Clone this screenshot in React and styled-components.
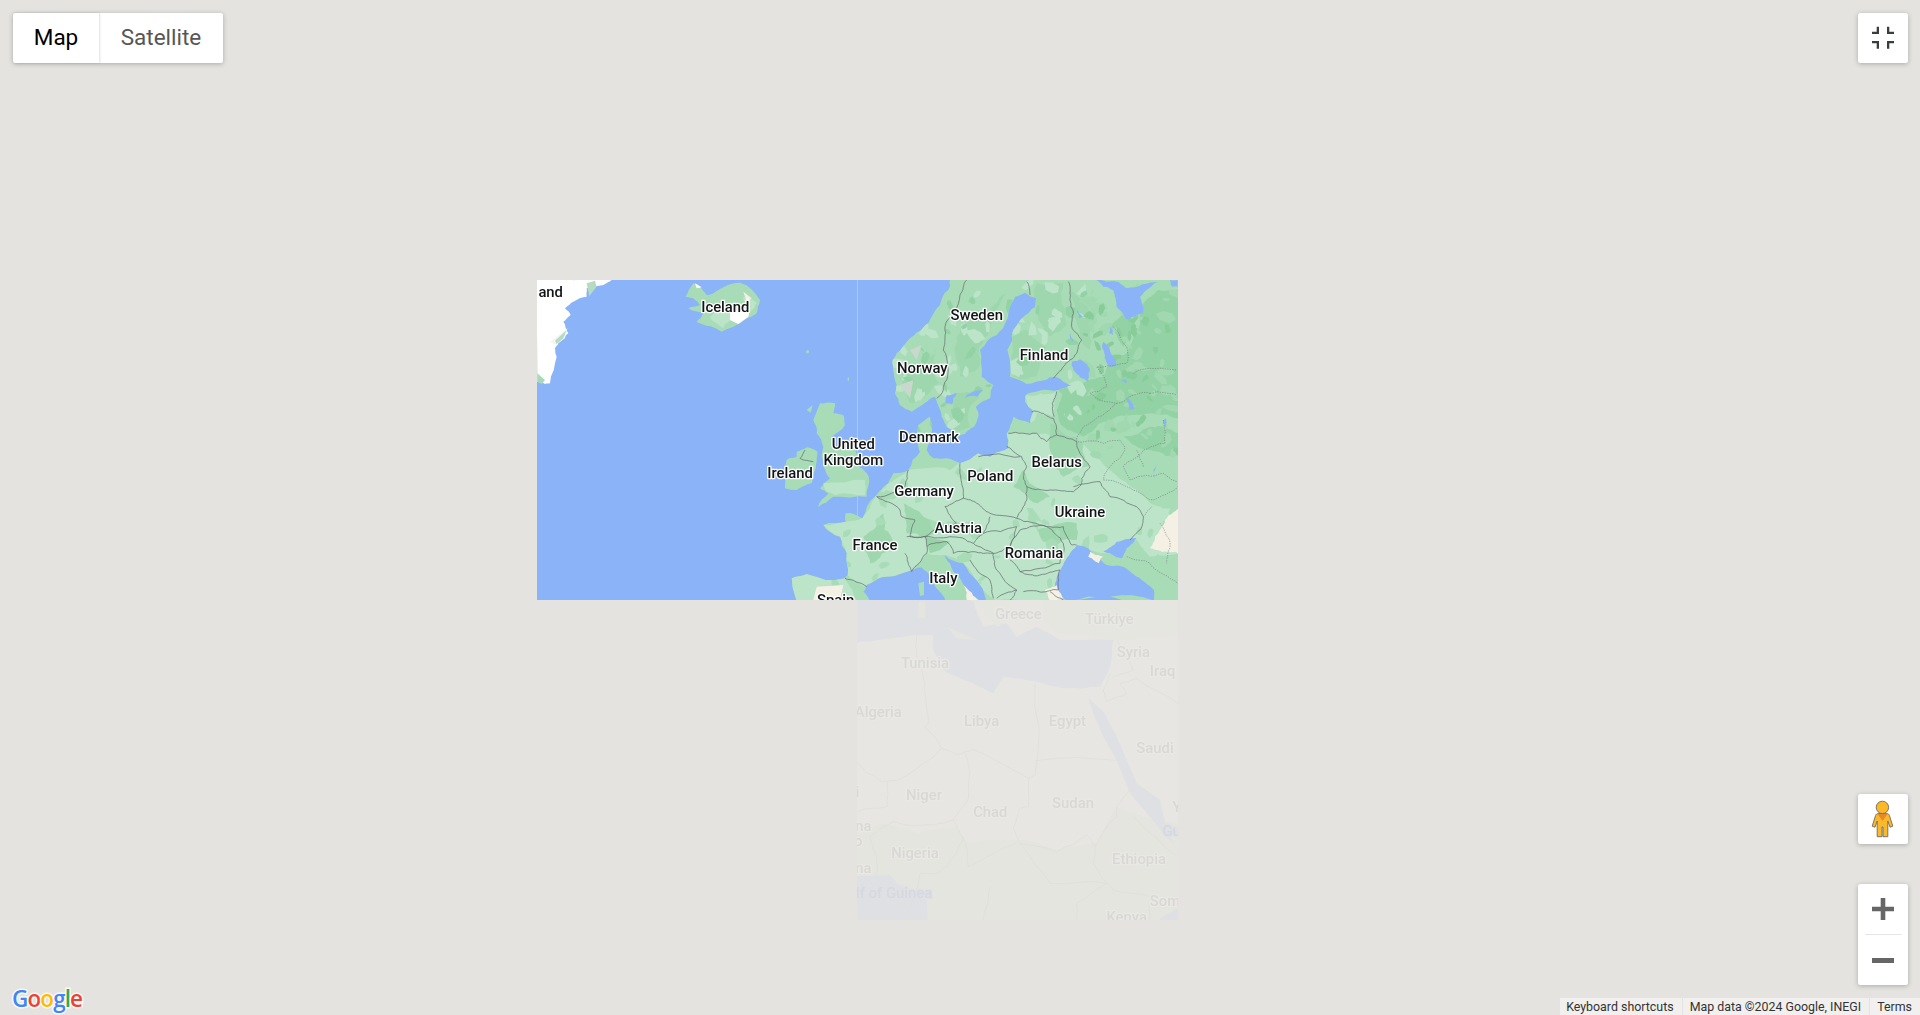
import React from "react";
import styled, { createGlobalStyle } from "styled-components";

const Global = createGlobalStyle`
  html, body { margin: 0; padding: 0; height: 100%; overflow: hidden; background: #e5e3df; }
  #root { height: 100%; }
`;

const Canvas = styled.div`
  position: relative;
  width: 100%;
  height: 100vh;
  overflow: hidden;
  background: #e4e3df;
  font-family: Roboto, "Liberation Sans", sans-serif;
`;

const Tile = styled.svg`
  position: absolute;
  left: ${(p) => p.$left}px;
  top: ${(p) => p.$top}px;
  width: ${(p) => p.$w}px;
  height: 320px;
  display: block;
  filter: blur(${(p) => p.$blur}px);
`;

const PlaceLabel = styled.text`
  font-family: Roboto, "Liberation Sans", sans-serif;
  font-weight: 500;
  font-size: 44.5px;
  fill: ${(p) => p.$fill || "#131416"};
  stroke: ${(p) => p.$halo || "rgba(255, 255, 255, 0.95)"};
  stroke-width: 8px;
  paint-order: stroke;
  stroke-linejoin: round;
`;

const Card = styled.div`
  position: absolute;
  background: #fff;
  border-radius: 2.5px;
  box-shadow: 0 1px 5px rgba(0, 0, 0, 0.25);
`;

const MapTypeBar = styled(Card)`
  left: 13px;
  top: 13px;
  height: 50px;
  display: flex;
`;

const MapTypeButton = styled.div`
  display: flex;
  align-items: center;
  justify-content: center;
  width: ${(p) => p.$w}px;
  font-size: 22.5px;
  padding-bottom: 2px;
  box-sizing: border-box;
  color: ${(p) => (p.$active ? "#000" : "#565656")};
  box-shadow: ${(p) => (p.$active ? "1px 0 2px rgba(0,0,0,.12)" : "none")};
`;

const IconButton = styled(Card)`
  right: 12px;
  top: ${(p) => p.$top}px;
  width: 50px;
  height: 50px;
  display: flex;
  align-items: center;
  justify-content: center;
`;

const ZoomCard = styled(Card)`
  right: 12px;
  top: 884px;
  width: 50px;
  height: 101px;
  display: flex;
  flex-direction: column;
  align-items: center;
`;

const ZoomBtn = styled.div`
  flex: 1;
  width: 100%;
  display: flex;
  align-items: center;
  justify-content: center;
`;

const ZoomDivider = styled.div`
  width: 37px;
  height: 1px;
  background: #e6e6e6;
`;

const Footer = styled.div`
  position: absolute;
  right: 0;
  bottom: 0;
  height: 17px;
  display: flex;
  gap: 1px;
  font-size: 12.4px;
  line-height: 17px;
  color: #333;
`;

const FooterItem = styled.div`
  background: rgba(245, 245, 245, 0.72);
  padding: 0 ${(p) => p.$pr}px 0 ${(p) => p.$pl}px;
  white-space: nowrap;
`;

const GoogleLogo = styled.div`
  position: absolute;
  left: 12px;
  bottom: 2px;
  font-family: "Open Sans", Roboto, sans-serif;
  font-weight: 600;
  font-size: 22.5px;
  line-height: 28px;
  letter-spacing: -0.9px;
  -webkit-text-stroke: 3px rgba(255, 255, 255, 0.75);
  paint-order: stroke fill;
`;

const LogoLetter = styled.span`
  color: ${(p) => p.$c};
`;

const OCEAN = "#8ab4f7";
const BASE = "#a8dcb7";
const LIGHT = "#bbe4c9";
const DARK = "#93d2a4";
const MID = "#9ed7ae";
const SAND = "#f5f0e4";

/* seeded noise so the drawn coastlines stay the same on every load */
const makeRandom = (seed) => () => {
  seed = (seed + 0x6d2b79f5) | 0;
  let t = Math.imul(seed ^ (seed >>> 15), 1 | seed);
  t = (t + Math.imul(t ^ (t >>> 7), 61 | t)) ^ t;
  return ((t ^ (t >>> 14)) >>> 0) / 4294967296;
};

const parse = (s) => s.trim().split(/\s+/).map((p) => p.split(",").map(Number));

const rough = (str, seed = 1, amp = 0.14, depth = 3, closed = false) => {
  const rnd = makeRandom(seed);
  let pts = parse(str);
  if (closed) pts = [...pts, pts[0]];
  for (let d = 0; d < depth; d++) {
    const next = [pts[0]];
    for (let i = 1; i < pts.length; i++) {
      const [ax, ay] = pts[i - 1];
      const [bx, by] = pts[i];
      const dx = bx - ax;
      const dy = by - ay;
      const k = (rnd() - 0.5) * 2 * amp;
      next.push([(ax + bx) / 2 - dy * k, (ay + by) / 2 + dx * k], [bx, by]);
    }
    pts = next;
  }
  return pts.map((p) => `${p[0].toFixed(1)},${p[1].toFixed(1)}`).join(" ");
};

const blobs = (seed, n, [x0, y0, x1, y1], [s0, s1]) => {
  const rnd = makeRandom(seed);
  const out = [];
  for (let i = 0; i < n; i++) {
    const cx = x0 + rnd() * (x1 - x0);
    const cy = y0 + rnd() * (y1 - y0);
    const size = s0 + rnd() * (s1 - s0);
    const angle = rnd() * Math.PI;
    const sq = 0.35 + rnd() * 0.4;
    const count = 6;
    const ring = [];
    for (let j = 0; j < count; j++) {
      const a = (j / count) * Math.PI * 2;
      const r = size * (0.6 + rnd() * 0.7);
      const px = Math.cos(a) * r;
      const py = Math.sin(a) * r * sq;
      ring.push(
        `${(cx + px * Math.cos(angle) - py * Math.sin(angle)).toFixed(1)},${(cy + px * Math.sin(angle) + py * Math.cos(angle)).toFixed(1)}`
      );
    }
    out.push(ring.join(" "));
  }
  return out;
};

const mainland =
  "300,-40 300,30 295,60 270,105 235,160 205,185 180,205 140,250 128,270 132,310 140,345 135,370 150,405 185,425 225,398 255,380 262,400 275,440 290,470 320,495 345,492 372,470 385,425 378,410 420,385 430,345 395,320 390,240 410,215 440,195 470,150 480,110 495,80 525,68 560,85 555,110 535,130 490,180 472,240 480,320 530,342 585,330 615,320 640,335 665,345 625,360 575,360 530,372 525,395 550,425 540,460 490,440 470,490 475,535 450,545 420,560 385,550 330,580 290,565 250,565 230,540 245,490 240,440 205,465 205,530 210,545 175,600 130,610 115,640 75,680 37,745 -13,730 -13,755 -80,765 -30,800 -10,850 -7,915 -15,925 -130,912 -175,925 -160,1040 60,1040 60,992 40,965 50,945 95,922 170,905 215,892 235,910 270,965 310,1040 390,1040 330,925 300,880 285,855 340,880 380,930 440,1040 1100,1040 1100,-40";

const lightAreas = [
  "470,490 560,490 620,495 700,520 780,600 900,700 983,720 983,850 900,860 860,810 780,850 680,825 640,880 620,992 440,992 340,880 285,855 230,850 185,905 215,892 95,922 40,950 -7,915 -10,850 -30,800 -80,765 -13,755 37,745 75,680 115,640 175,600 300,600 330,580 385,550 420,560 470,530",
  "-130,912 -15,925 20,992 -160,992 -175,925",
  "620,365 525,375 530,420 610,440",
];
const darkAreas = [
  "830,250 880,100 925,60 1000,60 1000,450 900,430 800,440 700,500 640,470 620,420 640,360 690,340 760,320 790,260",
  "780,170 830,120 860,170 820,230",
  "820,500 900,470 1000,490 1000,560 900,540",
];
const midAreas = [
  "600,460 700,520 720,590 640,620 600,540",
  "160,700 220,740 300,760 220,800 170,790",
  "480,200 530,180 590,230 560,320 490,320",
  "560,40 640,40 650,160 600,200 560,130",
  "320,200 390,140 470,70 420,180 380,300 330,320",
  "160,300 260,230 270,340 180,400",
  "300,380 400,350 360,470 310,480",
  "680,760 560,780 600,830 680,810",
  "100,730 40,800 60,880 130,820",
  "660,60 740,130 720,240 680,160",
  "520,600 600,680 560,700 490,650",
];
const lakes = [
  "665,275 690,268 720,300 715,335 690,322 670,300",
  "760,215 790,260 800,285 778,290 765,255",
  "290,375 320,370 305,405 288,400",
  "350,375 400,362 380,380 345,385",
  "830,385 855,415 835,420",
  "410,440 428,428 420,458",
  "495,405 522,405 510,415",
  "815,330 830,328 828,340",
  "780,170 790,195 778,190",
  "680,120 700,140 688,145",
  "660,190 672,215 660,205",
  "910,600 920,580 915,625",
  "940,450 948,445 945,475",
];
const seas = [
  "682,825 660,850 640,885 615,940 625,975 650,992 912,992 912,960 870,925 820,890 770,885 740,865 715,835",
  "760,845 800,815 860,805 830,835 815,865 780,850",
  "740,30 760,50 790,60 800,110 830,150 880,130 870,80 925,35 830,55 800,35",
  "960,30 983,30 983,50 965,50",
];
const sandAreas = [
  "1000,715 945,750 915,800 900,835 950,845 1000,860",
  "720,845 760,860 745,880 715,860",
  "620,945 640,985 600,990 585,960",
  "340,945 390,992 350,992",
];
const solidBorders = [
  "350,30 330,75 285,170 280,240 290,330 260,385",
  "530,35 540,75",
  "655,35 660,90 665,170 695,210 680,250 640,290 610,325",
  "545,425 580,430 610,445 620,495 590,515 560,490 475,490",
  "620,365 607,400 612,440",
  "620,495 680,515 690,550 720,590 695,625 695,640 670,665 600,660 530,650 520,620 530,590 515,560 470,530",
  "385,560 510,560",
  "330,580 335,640 340,685 380,700 420,730 500,745 530,690 530,650",
  "500,745 590,770 640,770 665,825 680,825",
  "670,650 750,635 780,680 860,710 880,740 870,780 840,810",
  "175,600 165,650 80,680 150,720 155,740 195,750 180,800 225,800",
  "340,685 285,710 320,760 225,800 300,800 370,820 400,790 420,740",
  "400,790 500,770 480,830 430,850 370,820",
  "480,830 510,780 590,770 640,820 630,880 510,905 480,870",
  "510,905 570,915 630,900 625,960 520,965",
  "165,850 175,880 185,905 230,850 225,800 170,800",
  "230,830 290,815 310,850 370,845 430,850 440,900 500,960 480,990",
  "360,870 420,930 430,985",
  "-15,925 50,950",
  "500,960 440,985",
  "600,965 640,990",
];
const dashedBorders = [
  "790,170 830,230 830,280 740,290 770,350 720,370 800,400 745,440 700,470 680,515 760,520 810,510 825,540 780,590 760,630",
  "850,310 980,300",
  "900,370 980,375",
  "800,400 900,370",
  "940,450 945,520 880,540 820,590 840,630 940,610 980,635",
  "880,590 860,540",
  "760,630 830,650 910,690 983,650",
  "905,710 880,740",
  "830,860 900,880 983,940",
  "930,760 960,820 950,880",
];

const labels = [
  ["Sweden", 380, 135], ["Norway", 217, 295], ["Finland", 582, 255],
  ["Denmark", 237, 502], ["Belarus", 620, 577], ["Poland", 421, 617],
  ["Germany", 222, 662], ["Austria", 325, 775], ["Ukraine", 690, 725],
  ["Romania", 552, 850], ["France", 75, 825], ["Italy", 280, 925],
  ["United", 10, 522], ["Kingdom", 10, 569], ["Ireland", -180, 608],
  ["Iceland", -374, 110], ["and", -898, 65], ["Spain", -43, 990],
];

const fadedLabels = [
  ["Greece", 505, 73], ["Türkiye", 778, 88], ["Syria", 850, 186], ["Iraq", 938, 244],
  ["Tunisia", 225, 218], ["Algeria", 85, 366], ["Libya", 395, 392], ["Egypt", 652, 393],
  ["Saudi", 915, 473], ["Niger", 222, 615], ["Chad", 421, 667], ["Sudan", 669, 640],
  ["Nigeria", 195, 788], ["Ethiopia", 867, 807], ["Som", 945, 932], ["Kenya", 830, 980],
  ["na", 40, 707], ["na", 40, 835], ["Y", 980, 650], ["i", 22, 605], ["o", 25, 752],
];

const africaBorders = [
  "200,140 200,200 220,260 225,310 235,400 225,410 275,475 325,495 370,478 535,565 555,555 555,280",
  "555,512 810,512",
  "535,565 535,650 510,655 490,715 510,760 570,770 620,785 710,735 735,770 800,680 800,650 840,600",
  "345,490 360,545 355,625 310,690 340,745 355,830 500,760",
  "275,475 145,570 95,575 45,545 22,520",
  "112,575 112,650 22,665",
  "310,690 250,705 170,705 130,695 100,710 60,740 80,800 80,860",
  "340,745 290,830 260,850 210,850 170,990",
  "780,250 760,300 770,335 830,310 810,280 860,265 983,340",
  "800,150 850,240 790,260",
  "735,770 730,820 790,900 900,920 900,990",
  "510,760 600,880 770,880 680,940 680,990",
  "420,890 400,990",
  "850,680 915,740 983,800",
];

const FADE = {
  land: "#e8e6e2",
  water: "#dfe0e3",
  green: "#e4e5de",
  north: "#e6e6e0",
  line: "#e0dfdb",
  text: "#d9d8d5",
  halo: "#e9e8e5",
  blue: "#d5d8df",
};

const Polys = ({ items, fill, seed = 3, amp = 0.14 }) =>
  items.map((pts, i) => <polygon key={i} points={rough(pts, seed + i, amp, 3, true)} fill={fill} />);

const Blobs = ({ items, fill }) => items.map((pts, i) => <polygon key={i} points={pts} fill={fill} />);

const Lines = ({ items, dashed }) =>
  items.map((pts, i) => (
    <polyline
      key={i}
      points={rough(pts, 50 + i, 0.1, 3)}
      fill="none"
      stroke={dashed ? "#72777a" : "#63686b"}
      strokeWidth={dashed ? 1.8 : 2.1}
      strokeDasharray={dashed ? "4 3.5" : undefined}
      strokeLinejoin="round"
    />
  ));

const roughMainland = rough(mainland, 7, 0.1, 2, false);

const EuropeTile = () => (
  <Tile $left={537} $top={280} $w={641} $blur={0.35} viewBox="537 280 641 320">
    <defs>
      <clipPath id="land">
        <polygon points={roughMainland} />
      </clipPath>
    </defs>
    <rect x="537" y="280" width="641" height="320" fill={OCEAN} />
    <rect x="857" y="280" width="1" height="320" fill="#a9c8f8" />
    <g transform="translate(530 270) scale(0.33333)">
      <polygon
        points={rough("20,30 245,30 220,45 170,55 170,80 130,95 105,115 122,135 100,155 115,190 85,220 75,235 80,260 60,340 45,342 22,335", 11, 0.1, 2)}
        fill="#ffffff"
      />
      <polygon points="60,215 112,175 105,205 75,225" fill="#f4f6f4" />
      <polygon points="170,40 195,32 200,50 178,78" fill="#b5dcc2" />
      <polygon points="75,212 110,180 100,205 80,222" fill="#b5dcc2" />
      <polygon points="22,310 45,330 35,342 22,335" fill="#a8d9b8" />
      <polygon points={rough("467,80 490,40 510,50 530,75 565,60 630,38 690,90 680,130 620,165 575,185 510,160 500,155 520,130 475,115 510,105 490,85", 12, 0.1, 2)} fill={BASE} />
      <Polys items={["540,140 590,110 620,130 580,175", "640,80 680,100 660,130"]} fill={LIGHT} seed={14} />
      <polygon points="600,125 660,115 655,140 625,162 600,150" fill="#fff" />
      <polygon points="495,40 515,52 500,55" fill="#fff" />
      <polygon points="640,65 665,85 650,95" fill={SAND} />
      <polygon points="830,240 838,243 835,250 828,248" fill={BASE} />
      <polygon points="952,325 958,322 955,335" fill={BASE} />
      <polygon points="830,420 848,405 842,428" fill={BASE} />
      <polygon points={rough("870,400 915,400 910,430 940,435 945,465 905,500 915,530 975,530 985,590 1016,620 1010,680 909,680 865,712 895,670 870,655 900,625 880,590 880,530 860,490 850,450", 15, 0.1, 2)} fill={BASE} />
      <polygon points={rough("880,640 1005,630 1005,675 915,675 885,660", 16, 0.08, 2)} fill={LIGHT} />
      <polygon points={rough("800,545 830,532 862,545 860,575 850,610 845,640 800,660 765,655 770,570 800,560", 17, 0.1, 2)} fill={BASE} />
      <polyline points={rough("825,540 810,565 850,575", 18, 0.15, 2)} fill="none" stroke="#63686b" strokeWidth="2.1" />
      <polyline points="795,960 830,965 850,975 830,992" fill="none" stroke="#63686b" strokeWidth="2" />
    </g>
    <g transform="translate(850 270) scale(0.33333)">
      <polygon points={roughMainland} fill={BASE} />
      <g clipPath="url(#land)">
        <Polys items={lightAreas} fill={LIGHT} seed={21} amp={0.08} />
        <Polys items={midAreas} fill={MID} seed={31} />
        <Polys items={darkAreas} fill={DARK} seed={41} amp={0.1} />
        <Blobs items={blobs(101, 55, [130, 30, 700, 480], [12, 34])} fill={LIGHT} />
        <Blobs items={blobs(102, 40, [130, 30, 700, 480], [10, 26])} fill={DARK} />
        <Blobs items={blobs(103, 60, [700, 60, 983, 560], [10, 30])} fill="#a1d8b0" />
        <Blobs items={blobs(104, 30, [700, 60, 983, 560], [8, 22])} fill="#88cc9a" />
        <Blobs items={blobs(105, 70, [-170, 560, 983, 990], [10, 30])} fill="#a8dcb7" />
        <polygon points="-100,950 -20,945 -30,990 -110,990" fill={SAND} />
        <polygon points="180,240 215,225 200,270" fill="#c8d8cc" />
        <polygon points="150,345 190,330 180,385" fill="#c8d8cc" />
        <polygon points="225,800 300,815 270,840 240,850" fill="#98d2a7" />
      </g>
      <Polys items={seas} fill={OCEAN} seed={61} amp={0.08} />
      <Polys items={lakes} fill={OCEAN} seed={71} />
      <Polys items={sandAreas} fill={SAND} seed={81} />
      <polygon points="205,940 222,935 222,975 210,978" fill={BASE} />
      <Lines items={solidBorders} />
      <Lines items={dashedBorders} dashed />
      {labels.map(([t, x, y]) => (
        <PlaceLabel key={t} x={x} y={y + 15} textAnchor="middle">
          {t}
        </PlaceLabel>
      ))}
    </g>
  </Tile>
);

const AfricaTile = () => (
  <Tile $left={857} $top={600} $w={321} $blur={0.35} viewBox="857 600 321 320">
    <rect x="857" y="600" width="321" height="320" fill={FADE.land} />
    <g transform="translate(850 590) scale(0.33333)">
      <polygon points={rough("22,740 100,700 200,730 320,710 360,760 510,750 620,780 740,760 800,650 880,680 983,700 1040,700 1040,1040 22,1040", 201, 0.06, 2)} fill={FADE.green} />
      <polygon points={rough("360,-30 470,-30 480,90 440,110 400,60", 203, 0.08, 2)} fill={FADE.north} />
      <polygon points={rough("560,-30 1040,-30 1040,130 800,150 700,130 620,130 580,90", 204, 0.05, 2)} fill={FADE.north} />
      <polygon points={rough("0,0 360,0 400,110 470,100 500,140 560,110 630,150 790,150 780,230 750,290 640,295 560,275 460,260 430,310 340,270 280,240 250,180 250,135 130,145 0,160", 202, 0.04, 2)} fill={FADE.water} />
      <polygon points={rough("360,30 470,30 480,90 440,110 400,60", 205, 0.08, 2)} fill={FADE.north} />
      <polygon points="205,35 225,35 225,85 205,85" fill={FADE.green} />
      <polygon points="290,110 380,150 320,145" fill={FADE.green} />
      <polygon points="715,325 760,365 800,440 830,510 860,580 930,630 950,720 975,765 950,740 900,680 840,610 800,510 760,440 730,370" fill={FADE.water} />
      <polygon points="0,860 120,855 140,880 230,920 235,1040 0,1040" fill={FADE.water} />
      <polygon points="930,985 983,955 1040,955 1040,1040 930,1040" fill={FADE.water} />
      {africaBorders.map((pts, i) => (
        <polyline key={i} points={rough(pts, 210 + i, 0.06, 2)} fill="none" stroke={FADE.line} strokeWidth="2.6" />
      ))}
      {fadedLabels.map(([t, x, y], i) => (
        <PlaceLabel key={i} x={x} y={y + 15} textAnchor="middle" $fill={FADE.text} $halo={FADE.halo}>
          {t}
        </PlaceLabel>
      ))}
      <PlaceLabel x={120} y={925} textAnchor="middle" $fill={FADE.blue} $halo={FADE.water}>ulf of Guinea</PlaceLabel>
      <PlaceLabel x={965} y={737} textAnchor="middle" $fill={FADE.blue} $halo={FADE.water}>Gu</PlaceLabel>
    </g>
  </Tile>
);

const ExitFullscreenIcon = () => (
  <svg width="50" height="50" viewBox="0 0 50 50" fill="#3a3c3e">
    <path d="M14 18.7h4.7V13.7H21V21H14z" />
    <path d="M36 18.7h-4.7V13.7H29V21H36z" />
    <path d="M14 30.3h4.7V35.7H21V28H14z" />
    <path d="M36 30.3h-4.7V35.7H29V28H36z" />
  </svg>
);

const Pegman = () => (
  <svg width="50" height="50" viewBox="0 0 50 50">
    <path
      d="M20.2 19.6 H28.8 C30.2 19.6 31 20.3 31.4 21.5 L34.8 32.2 L32 33.2 L29.8 27 V42.7 H25 V33 H24 V42.7 H19.2 V27 L17 33.2 L14.2 32.2 L17.6 21.5 C18 20.3 18.8 19.6 20.2 19.6 Z"
      fill="#fbb928"
      stroke="#7b7468"
      strokeWidth="1"
      strokeLinejoin="round"
    />
    <path d="M19.5 20 L24.5 27 L29.5 20 Z" fill="#e58a2c" />
    <circle cx="24.4" cy="13.4" r="6.2" fill="#fbb928" stroke="#7b7468" strokeWidth="1" />
  </svg>
);

const PlusIcon = () => (
  <svg width="22" height="22" viewBox="0 0 22 22" fill="#666">
    <path d="M8.7 0h4.6v8.7H22v4.6h-8.7V22H8.7v-8.7H0V8.7h8.7z" />
  </svg>
);

const MinusIcon = () => (
  <svg width="22" height="5" viewBox="0 0 22 5" fill="#666">
    <rect width="22" height="5" />
  </svg>
);

const logo = [["G", "#4285f4"], ["o", "#ea4335"], ["o", "#fbbc05"], ["g", "#4285f4"], ["l", "#34a853"], ["e", "#ea4335"]];

export default function App() {
  return (
    <Canvas>
      <Global />
      <EuropeTile />
      <AfricaTile />
      <MapTypeBar>
        <MapTypeButton $active $w={86}>Map</MapTypeButton>
        <MapTypeButton $w={124}>Satellite</MapTypeButton>
      </MapTypeBar>
      <IconButton $top={13}>
        <ExitFullscreenIcon />
      </IconButton>
      <IconButton $top={794}>
        <Pegman />
      </IconButton>
      <ZoomCard>
        <ZoomBtn><PlusIcon /></ZoomBtn>
        <ZoomDivider />
        <ZoomBtn><MinusIcon /></ZoomBtn>
      </ZoomCard>
      <GoogleLogo>
        {logo.map(([l, c], i) => (
          <LogoLetter key={i} $c={c}>{l}</LogoLetter>
        ))}
      </GoogleLogo>
      <Footer>
        <FooterItem $pl={6} $pr={8}>Keyboard shortcuts</FooterItem>
        <FooterItem $pl={7} $pr={8}>Map data ©2024 Google, INEGI</FooterItem>
        <FooterItem $pl={7} $pr={8}>Terms</FooterItem>
      </Footer>
    </Canvas>
  );
}
